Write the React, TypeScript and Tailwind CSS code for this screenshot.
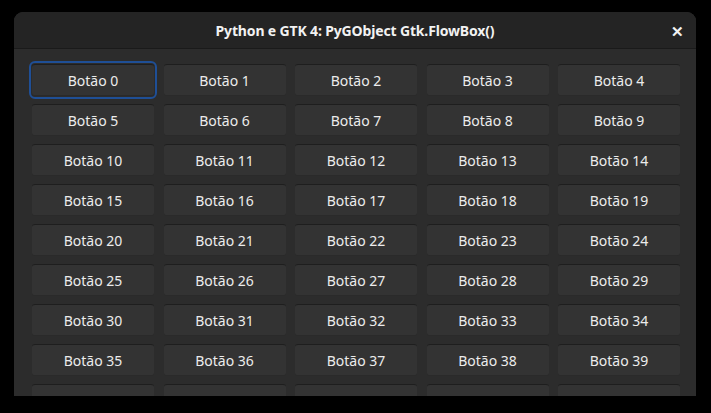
const buttons = Array.from({ length: 45 }, (_, i) => i);

export default function App() {
  return (
    <div className="w-[711px] h-[413px] bg-black overflow-hidden pt-[12px] pl-[14px]">
      {/* window */}
      <div
        className="w-[682px] h-[384px] rounded-t-[9px] bg-[#2c2c2c] overflow-hidden flex flex-col"
        style={{ fontFamily: '"Noto Sans", "Open Sans", sans-serif' }}
      >
        {/* header bar */}
        <div className="relative h-[37px] shrink-0 flex items-center justify-center bg-[#242424] border-b border-[#1a1a1a]">
          <span className="text-[14px] font-bold text-[#f2f2f2] tracking-[-0.15px]">
            Python e GTK 4: PyGObject Gtk.FlowBox()
          </span>
          <span className="absolute right-[12px] top-[8px] text-[15px] font-bold text-[#f2f2f2]">
            ✕
          </span>
        </div>

        {/* flowbox */}
        <div className="grid grid-cols-5 gap-x-[9.5px] gap-y-[8px] pl-[18px] pr-[16px] pt-[15px]">
          {buttons.map((n) => (
            <button
              key={n}
              type="button"
              className={`h-[32px] rounded-[3px] bg-[#333333] border-t border-[#1e1e1e] border-b border-b-[#2a2a2a] text-[14px] text-[#ececec] ${
                n === 0 ? "outline-2 outline-offset-1 outline-[#1f4f96]" : ""
              }`}
            >
              Botão {n}
            </button>
          ))}
        </div>
      </div>
    </div>
  );
}
